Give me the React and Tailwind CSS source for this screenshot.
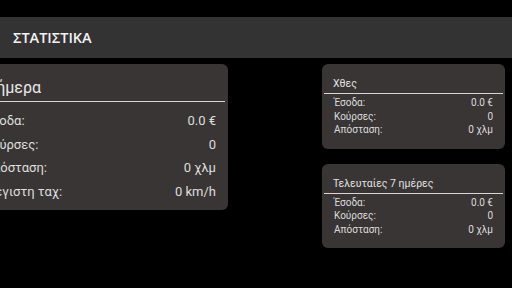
import React from 'react';

const today = [
  ['Έσοδα:', '0.0 €'],
  ['Κούρσες:', '0'],
  ['Απόσταση:', '0 χλμ'],
  ['Μέγιστη ταχ:', '0 km/h'],
];

const small = [
  ['Έσοδα:', '0.0 €'],
  ['Κούρσες:', '0'],
  ['Απόσταση:', '0 χλμ'],
];

function SmallCard({ title }) {
  return (
    <div className="w-[183px] rounded-[6px] bg-[#393534] px-[2px] pt-[13px] pb-[12px]">
      <div className="px-[9px] h-[14px] leading-[14px] text-[10.5px] text-[#e2e2e2]">{title}</div>
      <div className="mt-[2px] h-px bg-[#d6d6d6]" />
      <div className="mt-[2px] px-[10px]">
        {small.map(([label, value]) => (
          <div key={label} className="flex justify-between h-[13.5px] leading-[13.5px] text-[10px] text-[#dcdcdc]">
            <span>{label}</span>
            <span>{value}</span>
          </div>
        ))}
      </div>
    </div>
  );
}

export default function App() {
  return (
    <div className="w-[512px] h-[288px] overflow-hidden bg-black pt-[17px]" style={{ fontFamily: 'Roboto, "Noto Sans", sans-serif' }}>
      <div className="h-[41px] bg-[#333333] flex items-center px-[13px]">
        <h1 className="text-[14.5px] font-semibold text-[#f2f2f2]" style={{ fontFamily: '"Open Sans", "Noto Sans", sans-serif' }}>
          ΣΤΑΤΙΣΤΙΚΑ
        </h1>
      </div>

      <div className="flex justify-between items-start mt-[6px] pr-[7px]">
        <div className="-ml-[28px] w-[256px] shrink-0 rounded-[6px] bg-[#393534] px-[3px] pt-[14px] pb-[7px]">
          <div className="pl-[12px] pr-[9px] h-[20px] leading-[20px] text-[16px] text-[#e8e8e8]">Σήμερα</div>
          <div className="mt-[3px] h-px bg-[#d6d6d6]" />
          <div className="mt-[7px] px-[9px]">
            {today.map(([label, value]) => (
              <div key={label} className="flex justify-between h-[23.5px] leading-[23.5px] text-[13px] text-[#dedede]">
                <span>{label}</span>
                <span>{value}</span>
              </div>
            ))}
          </div>
        </div>

        <div className="flex flex-col gap-[15px]">
          <SmallCard title="Χθες" />
          <SmallCard title="Τελευταίες 7 ημέρες" />
        </div>
      </div>
    </div>
  );
}
